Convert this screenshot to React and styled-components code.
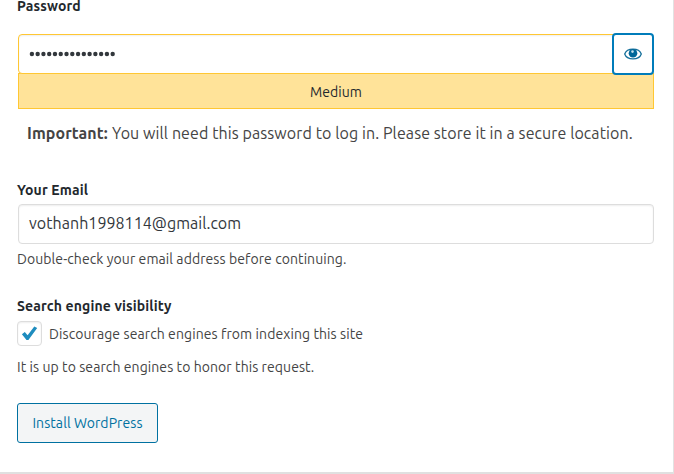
import React from "react";
import styled, { createGlobalStyle } from "styled-components";

const GlobalStyle = createGlobalStyle`
  * { box-sizing: border-box; }
  body {
    margin: 0;
    background: #fff;
    color: #444;
    font-family: Ubuntu, "Noto Sans", "Open Sans", sans-serif;
    font-size: 14px;
    overflow: hidden;
  }
`;

const Card = styled.main`
  width: 674px;
  height: 474px;
  padding: 0 19px 0 17px;
  background: #fff;
  border-right: 1px solid #e2e2e2;
  border-bottom: 2px solid #e0e0e0;
`;

const Text = styled.span`
  display: block;
  white-space: nowrap;
  font-size: ${(p) => p.$size || 14}px;
  line-height: ${(p) => p.$line || 20}px;
  letter-spacing: ${(p) => p.$spacing ?? 0.08}px;
`;

const Label = styled(Text).attrs({ as: "label" })`
  color: #23282d;
  font-weight: 700;
  letter-spacing: 0.13px;
`;

const PasswordSection = styled.section`
  height: 176px;
`;

const PasswordRow = styled.div`
  display: flex;
  position: relative;
  height: 40px;
  margin: 21px 0 0 1px;
`;

const Field = styled.div`
  display: flex;
  align-items: center;
  flex: 1;
  height: 40px;
  padding: 0 10px;
  background: #fff;
  color: #32373c;
  border: 1px solid ${(p) => p.$border || "#ddd"};
  border-radius: 4px;
  box-shadow: inset 0 1px 2px rgba(0, 0, 0, 0.07);
`;

const Dots = styled.svg`
  display: block;
  width: 90px;
  height: 8px;
`;

const EyeButton = styled.button`
  position: absolute;
  top: -1px;
  right: 0;
  display: grid;
  place-items: center;
  width: 42px;
  height: 42px;
  padding: 0;
  background: #fff;
  border: 2px solid #007cba;
  border-radius: 4px;
`;

const Strength = styled.div`
  display: grid;
  place-items: center;
  height: 36px;
  margin: -1px 0 0 1px;
  padding-top: 2px;
  color: #23282d;
  background: #ffe399;
  border: 1px solid #ffc733;
`;

const Note = styled.p`
  display: flex;
  margin: 14px 0 0 10px;
`;

const NoteStrong = styled(Text)`
  width: 85px;
  font-weight: 700;
`;

const EmailSection = styled.section`
  height: 116px;
  padding-top: 4px;
`;

const EmailField = styled(Field)`
  margin: 4px 0 5px 1px;
  padding-bottom: 2px;
`;

const VisibilitySection = styled.section`
  padding-top: 4px;
`;

const CheckRow = styled.div`
  display: flex;
  align-items: center;
  gap: 7px;
  height: 25px;
  margin: 5px 0 11px;
`;

const Checkbox = styled.span`
  display: grid;
  place-items: center;
  width: 25px;
  height: 25px;
  background: #fff;
  border: 1px solid #ddd;
  border-radius: 4px;
  box-shadow: inset 0 1px 2px rgba(0, 0, 0, 0.07);
`;

const InstallButton = styled.button`
  display: grid;
  place-items: center;
  width: 141px;
  height: 40px;
  margin-top: 26px;
  padding: 0;
  font-family: inherit;
  color: #0071a1;
  background: #f3f5f6;
  border: 1px solid #0071a1;
  border-radius: 3px;
`;

function EyeIcon() {
  return (
    <svg width="18" height="12" viewBox="0 0 18 12">
      <path d="M.7 6C3-.5 15-.5 17.300 6 15 12.500 3 12.500 .7 6Z" fill="#fff" stroke="#16709b" strokeWidth="1.300" />
      <circle cx="9" cy="5.300" r="4.300" fill="#006799" />
      <circle cx="8.500" cy="3.600" r="1.300" fill="#c4dfea" />
    </svg>
  );
}

function CheckIcon() {
  return (
    <svg width="17" height="17" viewBox="0 0 17 17">
      <path d="M.9 9.200 3.800 6.900 6.600 10.200 13.300 1.500 16.200 3.100 7.400 15H5.500Z" fill="#1e8cbe" />
    </svg>
  );
}

export default function App() {
  return (
    <>
      <GlobalStyle />
      <Card>
        <PasswordSection>
          <Label $line={13}>Password</Label>
          <PasswordRow>
            <Field $border="#ffc733">
              <Dots viewBox="0 0 90 8">
                {Array.from({ length: 15 }, (_, i) => (
                  <circle key={i} cx={2.9 + i * 5.77} cy="4" r="2.200" fill="#32373c" />
                ))}
              </Dots>
            </Field>
            <EyeButton aria-label="Hide password">
              <EyeIcon />
            </EyeButton>
          </PasswordRow>
          <Strength>
            <Text>Medium</Text>
          </Strength>
          <Note>
            <NoteStrong $size={16}>Important:</NoteStrong>
            <Text $size={16} $spacing={0.09}>
              You will need this password to log in. Please store it in a secure location.
            </Text>
          </Note>
        </PasswordSection>
        <EmailSection>
          <Label>Your Email</Label>
          <EmailField>
            <Text $size={16} $spacing={0.04}>vothanh1998114@gmail.com</Text>
          </EmailField>
          <Text>Double-check your email address before continuing.</Text>
        </EmailSection>
        <VisibilitySection>
          <Label>Search engine visibility</Label>
          <CheckRow>
            <Checkbox>
              <CheckIcon />
            </Checkbox>
            <Text $spacing={0.09}>Discourage search engines from indexing this site</Text>
          </CheckRow>
          <Text>It is up to search engines to honor this request.</Text>
        </VisibilitySection>
        <InstallButton>
          <Text>Install WordPress</Text>
        </InstallButton>
      </Card>
    </>
  );
}
